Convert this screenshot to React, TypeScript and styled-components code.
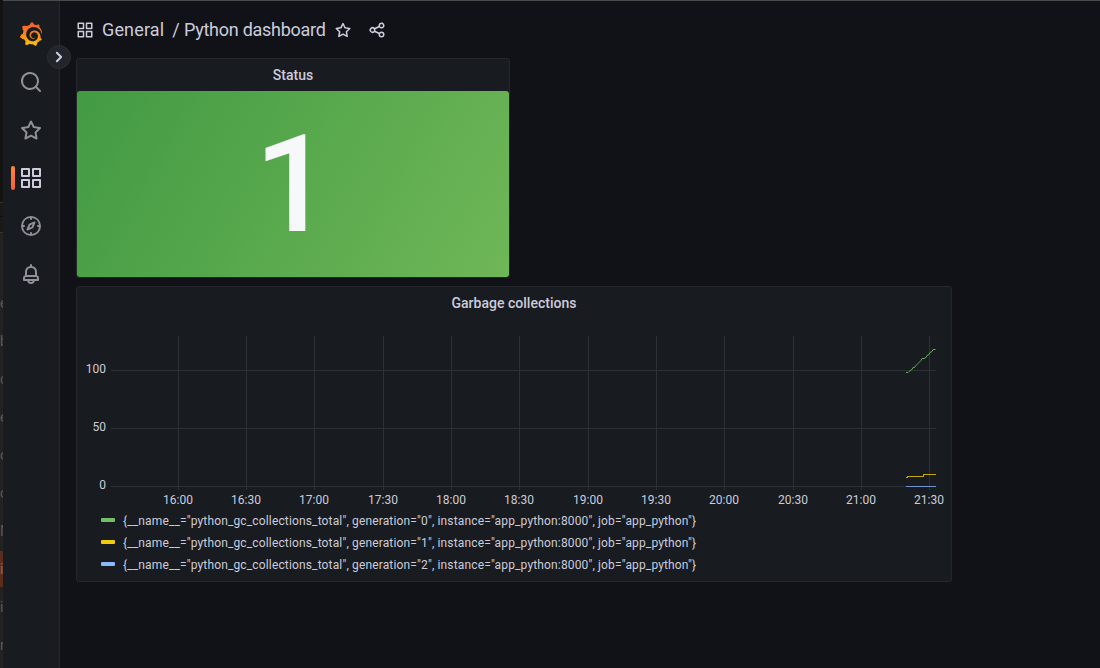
import React from "react";
import styled, { createGlobalStyle } from "styled-components";
import { SiGrafana } from "react-icons/si";

const Global = createGlobalStyle`
  * { box-sizing: border-box; }
  body {
    margin: 0;
    background: #111217;
    color: rgb(204, 204, 220);
    font-family: Roboto, "Liberation Sans", sans-serif;
    overflow: hidden;
  }
`;

const line = "#25272c";

const paths = {
  apps: "M10,13H3a1,1,0,0,0-1,1v7a1,1,0,0,0,1,1h7a1,1,0,0,0,1-1V14A1,1,0,0,0,10,13ZM9,20H4V15H9ZM21,2H14a1,1,0,0,0-1,1v7a1,1,0,0,0,1,1h7a1,1,0,0,0,1-1V3A1,1,0,0,0,21,2ZM20,9H15V4h5Zm1,4H14a1,1,0,0,0-1,1v7a1,1,0,0,0,1,1h7a1,1,0,0,0,1-1V14A1,1,0,0,0,21,13Zm-1,7H15V15h5ZM10,2H3A1,1,0,0,0,2,3v7a1,1,0,0,0,1,1h7a1,1,0,0,0,1-1V3A1,1,0,0,0,10,2ZM9,9H4V4H9Z",
  search: "M21.71,20.29,18,16.61A9,9,0,1,0,16.61,18l3.68,3.68a1,1,0,0,0,1.42,0A1,1,0,0,0,21.71,20.29ZM11,18a7,7,0,1,1,7-7A7,7,0,0,1,11,18Z",
  star: "M22,9.67A1,1,0,0,0,21.14,9l-5.69-.83L12.9,3a1,1,0,0,0-1.8,0L8.55,8.16,2.86,9a1,1,0,0,0-.81.68,1,1,0,0,0,.25,1l4.13,4-1,5.68A1,1,0,0,0,6.9,21.44L12,18.77l5.1,2.67a.93.93,0,0,0,.46.12,1,1,0,0,0,.59-.19,1,1,0,0,0,.4-1l-1-5.68,4.13-4A1,1,0,0,0,22,9.67Zm-6.15,4a1,1,0,0,0-.29.88l.72,4.2-3.76-2a1.06,1.06,0,0,0-.94,0l-3.76,2,.72-4.2a1,1,0,0,0-.29-.88l-3-3,4.21-.61a1,1,0,0,0,.76-.55L12,5.7l1.88,3.82a1,1,0,0,0,.76.55l4.21.61Z",
  compass: "M12,2A10,10,0,1,0,22,12,10,10,0,0,0,12,2Zm1,17.93V19a1,1,0,0,0-2,0v.93A8,8,0,0,1,4.07,13H5a1,1,0,0,0,0-2H4.07A8,8,0,0,1,11,4.07V5a1,1,0,0,0,2,0V4.07A8,8,0,0,1,19.93,11H19a1,1,0,0,0,0,2h.93A8,8,0,0,1,13,19.93ZM15.14,7.55l-5,2.12a1,1,0,0,0-.52.52l-2.12,5a1,1,0,0,0,.21,1.1,1,1,0,0,0,.7.29.93.93,0,0,0,.4-.09l5-2.12a1,1,0,0,0,.52-.52l2.12-5a1,1,0,0,0-1.31-1.31Zm-2.49,5.1-2.28,1,1-2.28,2.28-1Z",
  bell: "M18,13.18V10a6,6,0,0,0-5-5.91V3a1,1,0,0,0-2,0V4.09A6,6,0,0,0,6,10v3.18A3,3,0,0,0,4,16v2a1,1,0,0,0,1,1H8.14a4,4,0,0,0,7.72,0H19a1,1,0,0,0,1-1V16A3,3,0,0,0,18,13.18ZM8,10a4,4,0,0,1,8,0v3H8Zm4,10a2,2,0,0,1-1.72-1h3.44A2,2,0,0,1,12,20Zm6-3H6V16a1,1,0,0,1,1-1H17a1,1,0,0,1,1,1Z",
  share: "M18,14a4,4,0,0,0-3.08,1.48l-5.1-2.35a3.64,3.64,0,0,0,0-2.26l5.1-2.35A4,4,0,1,0,14,6a4.17,4.17,0,0,0,.07.71L8.79,9.14a4,4,0,1,0,0,5.72l5.28,2.43A4.17,4.17,0,0,0,14,18a4,4,0,1,0,4-4ZM18,4a2,2,0,1,1-2,2A2,2,0,0,1,18,4ZM6,14a2,2,0,1,1,2-2A2,2,0,0,1,6,14Zm12,6a2,2,0,1,1,2-2A2,2,0,0,1,18,20Z",
  angle: "M14.83,11.29,10.59,7.05a1,1,0,0,0-1.42,0,1,1,0,0,0,0,1.41L12.71,12,9.17,15.54a1,1,0,0,0,0,1.41,1,1,0,0,0,.71.29,1,1,0,0,0,.71-.29l4.24-4.24A1,1,0,0,0,14.83,11.29Z",
};

const Svg = styled.svg`
  display: block;
  flex: none;
  fill: currentColor;
`;

const Icon = ({ name, size }: { name: keyof typeof paths; size: number }) => (
  <Svg width={size} height={size} viewBox="0 0 24 24">
    <path d={paths[name]} />
  </Svg>
);

const Screen = styled.div`
  display: flex;
  width: 1100px;
  height: 668px;
  overflow: hidden;
`;

const Behind = styled.div`
  width: 3px;
  flex: none;
  overflow: hidden;
  padding-top: 285px;
  background: linear-gradient(
    #131313 0 202px,
    #3a3424 202px 203px,
    #191919 203px 216px,
    #0e0e0e 216px 217px,
    #191919 217px 232px,
    #3a3424 232px 233px,
    #222 233px
  );
`;

const BehindRow = styled.div<{ $active?: boolean }>`
  height: 38px;
  line-height: 36px;
  font-size: 14px;
  color: ${(p) => (p.$active ? "#8a6a5e" : "#5a5a5a")};
  background: ${(p) => (p.$active ? "linear-gradient(#5c2c1c, #5c2c1c) 0 0 / 100% 36px no-repeat" : "none")};
`;

const Window = styled.div`
  display: flex;
  flex: 1;
  min-width: 0;
  border-top: 1px solid #4b4b4b;
`;

const Sidebar = styled.nav`
  position: relative;
  display: flex;
  flex-direction: column;
  flex: none;
  width: 57px;
  padding-top: 9px;
  background: #181b1f;
  border-right: 1px solid ${line};
`;

const NavItem = styled.a<{ $active?: boolean }>`
  display: flex;
  align-items: center;
  height: 48px;
  padding-left: ${(p) => (p.$active ? 8 : 16)}px;
  color: ${(p) => (p.$active ? "rgb(204, 204, 220)" : "rgb(143, 144, 154)")};
`;

const ActiveBar = styled.span`
  width: 4px;
  height: 24px;
  margin-right: 4px;
  border-radius: 2px;
  background: linear-gradient(#ff8833, #f55f3e);
`;

const Logo = styled(SiGrafana)`
  path { fill: url(#flame); }
`;

const Toggle = styled.button`
  position: absolute;
  z-index: 1;
  top: 44px;
  right: -12px;
  display: flex;
  align-items: center;
  justify-content: center;
  width: 24px;
  height: 24px;
  padding: 0;
  border: 1px solid #2c2e34;
  border-radius: 50%;
  background: #22252b;
  color: rgb(204, 204, 220);
`;

const Main = styled.main`
  flex: 1;
  min-width: 0;
  padding-left: 16px;
`;

const Toolbar = styled.header`
  display: flex;
  align-items: center;
  height: 57px;
`;

const Crumb = styled.h1<{ $spacing: number }>`
  margin: 0 0 0 8px;
  font-size: 18px;
  font-weight: 400;
  line-height: 27px;
  letter-spacing: ${(p) => p.$spacing}px;
  white-space: pre;
`;

const Slash = styled.span`
  letter-spacing: -0.1px;
`;

const ToolIcon = styled.span<{ $gap: number }>`
  margin-left: ${(p) => p.$gap}px;
`;

const Panel = styled.section<{ $w: number; $h: number }>`
  display: flex;
  flex-direction: column;
  width: ${(p) => p.$w}px;
  height: ${(p) => p.$h}px;
  margin-bottom: 8px;
  border: 1px solid ${line};
  border-radius: 3px;
  background: #181b1f;
`;

const PanelTitle = styled.h2`
  margin: 0;
  height: 32px;
  font-size: 14px;
  font-weight: 500;
  line-height: 32px;
  letter-spacing: 0.02px;
  text-align: center;
`;

const Stat = styled.div`
  flex: 1;
  display: flex;
  align-items: center;
  justify-content: center;
  padding-top: 2px;
  border-radius: 3px;
  background: linear-gradient(120deg, rgb(66, 154, 67), rgb(111, 183, 87));
  color: rgb(247, 248, 250);
  font-size: 136px;
  font-weight: 500;
  line-height: 1;
`;

const Chart = styled.svg`
  display: block;
  font-size: 12px;
  fill: rgb(204, 204, 220);
`;

const Legend = styled.ul`
  margin: 0;
  padding: 0 0 0 24px;
  list-style: none;
`;

const LegendRow = styled.li`
  display: flex;
  align-items: center;
  height: 22px;
  font-size: 12px;
  letter-spacing: 0.147px;
`;

const LegendLabel = styled.span`
  padding-top: 2px;
`;

const Swatch = styled.span<{ $color: string }>`
  width: 14px;
  height: 4px;
  margin-right: 8px;
  border-radius: 1px;
  background: ${(p) => p.$color};
`;

const times = ["16:00", "16:30", "17:00", "17:30", "18:00", "18:30", "19:00", "19:30", "20:00", "20:30", "21:00", "21:30"];
const tickX = [178, 246, 314, 383, 451, 519, 588, 656, 724, 793, 861, 929];
const levels: [string, number][] = [["100", 370], ["50", 428], ["0", 486]];
const series = ["#73bf69", "#f2cc0c", "#8ab8ff"];
const behind = ["e", "b", "c", "e", "c", "c", "M", "i", "i", "r"];

export default function App() {
  return (
    <Screen>
      <Global />
      <Behind>
        {behind.map((c, i) => (
          <BehindRow key={i} $active={i === 7}>{c}</BehindRow>
        ))}
      </Behind>
      <Window>
        <Sidebar>
          <NavItem>
            <svg width="0" height="0">
              <defs>
                <linearGradient id="flame" x1="0" y1="1" x2="0" y2="0">
                  <stop offset="0" stopColor="#fcc70b" />
                  <stop offset="0.45" stopColor="#f8891d" />
                  <stop offset="1" stopColor="#f05a2b" />
                </linearGradient>
              </defs>
            </svg>
            <Logo size={24} />
          </NavItem>
          <NavItem><Icon name="search" size={24} /></NavItem>
          <NavItem><Icon name="star" size={24} /></NavItem>
          <NavItem $active><ActiveBar /><Icon name="apps" size={24} /></NavItem>
          <NavItem><Icon name="compass" size={24} /></NavItem>
          <NavItem><Icon name="bell" size={24} /></NavItem>
          <Toggle><Icon name="angle" size={24} /></Toggle>
        </Sidebar>
        <Main>
          <Toolbar>
            <Icon name="apps" size={18} />
            <Crumb $spacing={0.15}>General</Crumb>
            <Crumb $spacing={-0.26}><Slash>/ </Slash>Python dashboard</Crumb>
            <ToolIcon $gap={8}><Icon name="star" size={18} /></ToolIcon>
            <ToolIcon $gap={16}><Icon name="share" size={18} /></ToolIcon>
          </Toolbar>
          <Panel $w={434} $h={220}>
            <PanelTitle>Status</PanelTitle>
            <Stat>1</Stat>
          </Panel>
          <Panel $w={876} $h={296}>
            <PanelTitle>Garbage collections</PanelTitle>
            <Chart width="874" height="190" viewBox="77 319 874 190">
              <g stroke="#2e3134" shapeRendering="crispEdges">
                {tickX.map((x) => <line key={x} x1={x + 0.5} x2={x + 0.5} y1={336} y2={490} />)}
                {levels.map(([l, y]) => <line key={l} x1={111} x2={936} y1={y + 0.5} y2={y + 0.5} />)}
              </g>
              {levels.map(([l, y]) => <text key={l} x={106} y={y + 3} textAnchor="end">{l}</text>)}
              {times.map((t, i) => <text key={t} x={tickX[i]} y={504} textAnchor="middle">{t}</text>)}
              <g fill="none">
                <path
                  stroke="#68ac60"
                  d="M906 372.5H908L909 371.5L910.5 370.5L912 369.5L913 367.5H914.5L916 365.5L918 363.5L919 362.5L921 360.5L922 358.5H924L926 357.5L927 355.5L929 354.5L930 352.5L932 351.5L933 349.5H935.5"
                />
                <path stroke="#c3a510" shapeRendering="crispEdges" d="M906 477.5h1v-1h16v-2h13" />
                <path stroke="#7096d2" shapeRendering="crispEdges" d="M906 486.5h30" />
              </g>
            </Chart>
            <Legend>
              {series.map((color, i) => (
                <LegendRow key={color}>
                  <Swatch $color={color} />
                  <LegendLabel>
                    {`{__name__="python_gc_collections_total", generation="${i}", instance="app_python:8000", job="app_python"}`}
                  </LegendLabel>
                </LegendRow>
              ))}
            </Legend>
          </Panel>
        </Main>
      </Window>
    </Screen>
  );
}
